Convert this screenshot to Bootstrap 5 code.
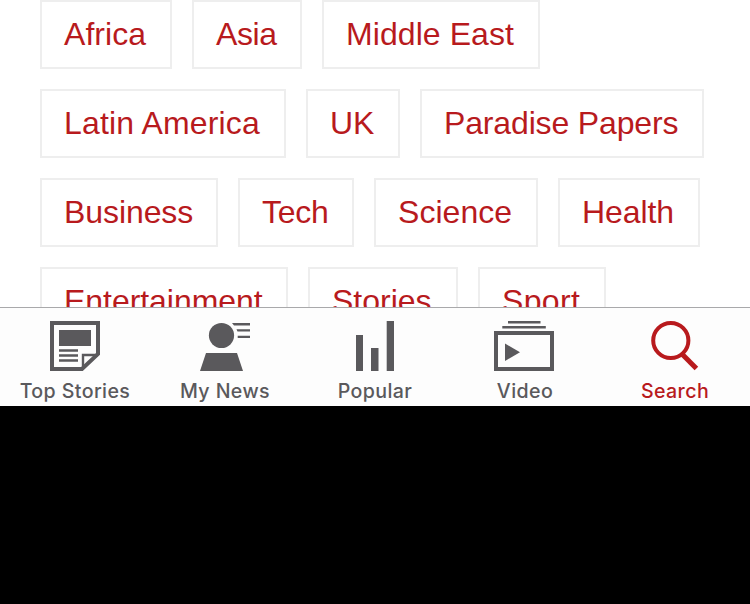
<!DOCTYPE html>
<html lang="en">
<head>
<meta charset="utf-8">
<meta name="viewport" content="width=device-width, initial-scale=1">
<title>News topics</title>
<link href="https://cdn.jsdelivr.net/npm/bootstrap@5.3.0/dist/css/bootstrap.min.css" rel="stylesheet">
<style>
body { font-family: "Liberation Sans", Arial, sans-serif; }
.screen { height: 604px; }
.topics { height: 307px; padding-left: 40px; row-gap: 20px; }
.topic-row { gap: 20px; }
.topic { box-sizing: border-box; height: 69px; border: 2px solid #eee; padding: 0 0 0 22px; font-size: 32px; line-height: 65px; color: #b81a1d; text-decoration: none; white-space: nowrap; }
.t-africa { width: 132px; letter-spacing: .05px; }
.t-asia { width: 110px; letter-spacing: -.4px; }
.t-mideast { width: 218px; letter-spacing: .07px; }
.t-latin { width: 246px; letter-spacing: .16px; }
.t-uk { width: 94px; }
.t-papers { width: 284px; letter-spacing: -.15px; }
.t-business { width: 178px; letter-spacing: -.08px; }
.t-tech { width: 116px; letter-spacing: -.25px; }
.t-science { width: 164px; letter-spacing: .05px; }
.t-health { width: 142px; letter-spacing: -.1px; }
.t-ent { width: 248px; letter-spacing: -.05px; }
.t-stories { width: 150px; }
.t-sport { width: 128px; letter-spacing: .35px; }
.tabbar { height: 99px; border-top: 1px solid #a9a9ab; background: #fdfdfd; }
.tab { width: 150px; color: #5a595c; text-decoration: none; font: 500 19.6px/24px Inter, "Liberation Sans", sans-serif; letter-spacing: .4px; }
.tab.current { color: #b81a1d; }
.tab svg { width: 150px; height: 71px; }
</style>
</head>
<body class="bg-black">
<div class="screen d-flex flex-column overflow-hidden">
  <main class="topics d-flex flex-column bg-white overflow-hidden flex-shrink-0">
    <div class="topic-row d-flex flex-shrink-0"><a class="topic t-africa" href="#">Africa</a><a class="topic t-asia" href="#">Asia</a><a class="topic t-mideast" href="#">Middle East</a></div>
    <div class="topic-row d-flex flex-shrink-0"><a class="topic t-latin" href="#">Latin America</a><a class="topic t-uk" href="#">UK</a><a class="topic t-papers" href="#">Paradise Papers</a></div>
    <div class="topic-row d-flex flex-shrink-0"><a class="topic t-business" href="#">Business</a><a class="topic t-tech" href="#">Tech</a><a class="topic t-science" href="#">Science</a><a class="topic t-health" href="#">Health</a></div>
    <div class="topic-row d-flex flex-shrink-0"><a class="topic t-ent" href="#">Entertainment</a><a class="topic t-stories" href="#">Stories</a><a class="topic t-sport" href="#">Sport</a></div>
  </main>
  <nav class="tabbar d-flex flex-shrink-0">
    <a class="tab d-flex flex-column align-items-center" href="#">
      <svg viewBox="0 0 150 71" fill="none" stroke="currentColor"><path d="M52 15H98V46L82 61H52Z" stroke-width="4"/><path d="M83 61V47H98" stroke-width="2.4"/><path d="M59 22H91V38H59Z" fill="currentColor" stroke="none"/><path d="M59 42.5H78M59 47.5H78M59 52.5H78" stroke-width="2.4"/></svg>
      <span>Top Stories</span></a>
    <a class="tab d-flex flex-column align-items-center" href="#">
      <svg viewBox="0 0 150 71" fill="currentColor"><circle cx="71.5" cy="27.5" r="12.6"/><path d="M56 45H87L93 63H50Z"/><path d="M82 15H100V17.4H84ZM86.5 21.2H100V23.6H87.5ZM87.7 27.7H100V30.1H87.7Z"/></svg>
      <span>My News</span></a>
    <a class="tab d-flex flex-column align-items-center" href="#">
      <svg viewBox="0 0 150 71" fill="currentColor"><path d="M56 27h7v36h-7zM71 40h7.5v23H71zM86.7 13H94v50h-7.3z"/></svg>
      <span>Popular</span></a>
    <a class="tab d-flex flex-column align-items-center" href="#">
      <svg viewBox="0 0 150 71" fill="none" stroke="currentColor"><path d="M58 14.3H90.5M52.3 19.3H95.8" stroke-width="2.5"/><path d="M46 25H102V61H46Z" stroke-width="4"/><path d="M55 35.5L70 44.3L55 53Z" fill="currentColor" stroke="none"/></svg>
      <span>Video</span></a>
    <a class="tab current d-flex flex-column align-items-center" href="#" aria-current="page">
      <svg viewBox="0 0 150 71" fill="none" stroke="currentColor"><circle cx="70.8" cy="32.5" r="17.6" stroke-width="4"/><path d="M82 46L96.4 60.6" stroke-width="5"/></svg>
      <span>Search</span></a>
  </nav>
</div>
<script src="https://cdn.jsdelivr.net/npm/bootstrap@5.3.0/dist/js/bootstrap.bundle.min.js"></script>
</body>
</html>
